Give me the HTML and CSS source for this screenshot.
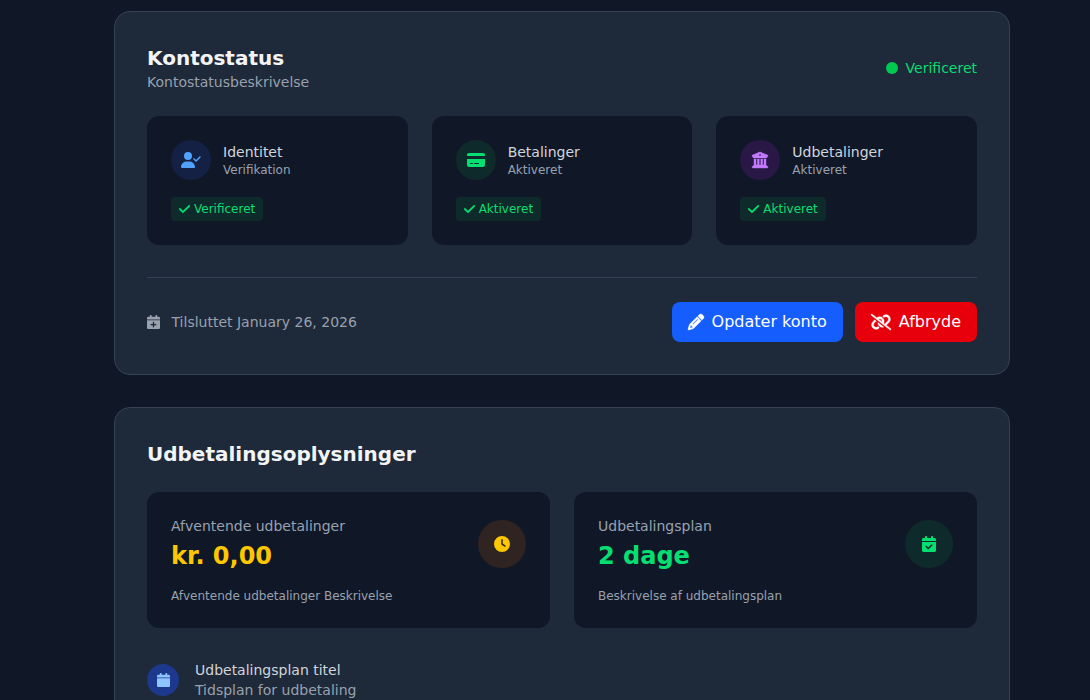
FILE: index.html
```html
<!DOCTYPE html>
<html lang="da">
<head>
<meta charset="utf-8">
<title>Kontostatus</title>
<link rel="stylesheet" href="styles.css">
</head>
<body>
<svg class="defs" aria-hidden="true">
  <symbol id="check" viewBox="0 0 448 512" preserveAspectRatio="none"><path d="M438.6 105.4c12.5 12.5 12.5 32.8 0 45.3l-256 256c-12.5 12.5-32.8 12.5-45.3 0l-128-128c-12.5-12.5-12.5-32.8 0-45.3s32.8-12.5 45.3 0L160 338.7 393.4 105.4c12.5-12.5 32.8-12.5 45.3 0z"/></symbol>
</svg>
<main class="page">
  <section class="card">
    <header class="card-header">
      <div>
        <h2 class="title">Kontostatus</h2>
        <p class="subtitle">Kontostatusbeskrivelse</p>
      </div>
      <div class="state"><span class="dot"></span>Verificeret</div>
    </header>
    <div class="tiles three">
      <article class="tile">
        <div class="tile-head">
          <span class="circle c40 blue"><svg width="20" height="16" viewBox="0 0 640 512"><path d="M96 128a128 128 0 1 1 256 0A128 128 0 1 1 96 128zM0 482.3C0 383.8 79.8 304 178.3 304h91.4C368.2 304 448 383.8 448 482.3c0 16.4-13.3 29.7-29.7 29.7H29.7C13.3 512 0 498.7 0 482.3zM625 177L497 305c-9.4 9.4-24.6 9.4-33.9 0l-64-64c-9.4-9.4-9.4-24.6 0-33.9s24.6-9.4 33.9 0l47 47L591 143c9.4-9.4 24.6-9.4 33.9 0s9.4 24.6 0 33.9z"/></svg></span>
          <div><h3 class="name">Identitet</h3><p class="small">Verifikation</p></div>
        </div>
        <span class="badge"><svg class="bold" width="11" height="12"><use href="#check"/></svg>Verificeret</span>
      </article>
      <article class="tile">
        <div class="tile-head">
          <span class="circle c40 green"><svg width="18" height="16" viewBox="0 0 576 512"><path d="M64 32C28.7 32 0 60.7 0 96v32H576V96c0-35.3-28.7-64-64-64H64zM576 224H0V416c0 35.3 28.7 64 64 64H512c35.3 0 64-28.7 64-64V224zM112 352h64c8.8 0 16 7.2 16 16s-7.2 16-16 16H112c-8.8 0-16-7.2-16-16s7.2-16 16-16zm112 16c0-8.8 7.2-16 16-16H368c8.8 0 16 7.2 16 16s-7.2 16-16 16H240c-8.8 0-16-7.2-16-16z"/></svg></span>
          <div><h3 class="name">Betalinger</h3><p class="small">Aktiveret</p></div>
        </div>
        <span class="badge"><svg class="bold" width="11" height="12"><use href="#check"/></svg>Aktiveret</span>
      </article>
      <article class="tile">
        <div class="tile-head">
          <span class="circle c40 purple"><svg class="medium" width="16" height="16" viewBox="0 0 512 512"><path d="M243.4 2.6l-224 96c-14 6-21.8 21-18.7 35.8S16.8 160 32 160v8c0 13.3 10.7 24 24 24H456c13.3 0 24-10.7 24-24v-8c15.2 0 28.3-10.7 31.3-25.6s-4.8-29.9-18.7-35.8l-224-96c-8-3.4-17.2-3.4-25.2 0zM128 224H64V420.3c-.6 .3-1.2 .7-1.8 1.1l-48 32c-11.7 7.8-17 22.4-12.9 35.9S17.9 512 32 512H480c14.1 0 26.5-9.2 30.6-22.7s-1.1-28.1-12.9-35.9l-48-32c-.6-.4-1.2-.7-1.8-1.1V224H384V416H344V224H280V416H232V224H168V416H128V224zM256 64a32 32 0 1 1 0 64 32 32 0 1 1 0-64z"/></svg></span>
          <div><h3 class="name">Udbetalinger</h3><p class="small">Aktiveret</p></div>
        </div>
        <span class="badge"><svg class="bold" width="11" height="12"><use href="#check"/></svg>Aktiveret</span>
      </article>
    </div>
    <footer class="card-footer">
      <div class="connected"><svg width="13" height="14" preserveAspectRatio="none" viewBox="0 0 448 512"><path fill-rule="evenodd" d="M96 32V64H48C21.5 64 0 85.5 0 112v48H448V112c0-26.5-21.5-48-48-48H352V32c0-17.7-14.3-32-32-32s-32 14.3-32 32V64H160V32c0-17.7-14.3-32-32-32S96 14.3 96 32zM448 192H0V464c0 26.5 21.5 48 48 48H400c26.5 0 48-21.5 48-48V192zM224 248c13.3 0 24 10.7 24 24v56h56c13.3 0 24 10.7 24 24s-10.7 24-24 24H248v56c0 13.3-10.7 24-24 24s-24-10.7-24-24V376H144c-13.3 0-24-10.7-24-24s10.7-24 24-24h56V272c0-13.3 10.7-24 24-24z"/></svg>Tilsluttet January 26, 2026</div>
      <div class="actions">
        <button class="btn btn-blue"><svg class="medium" width="16" height="16" viewBox="0 0 512 512"><path d="M410.3 231l11.3-11.3-33.9-33.9-62.1-62.1L291.7 89.8l-11.3 11.3-22.6 22.6L58.6 322.9c-10.4 10.4-18 23.3-22.2 37.4L1 480.7c-2.5 8.4-.2 17.5 6.1 23.7s15.3 8.5 23.7 6.1l120.3-35.4c14.1-4.2 27-11.8 37.4-22.2L387.7 253.7 410.3 231zM160 399.4l-9.1 22.7c-4 3.1-8.5 5.4-13.3 6.9L59.4 452l23-78.1c1.4-4.9 3.8-9.4 6.9-13.3l22.7-9.1v32c0 8.8 7.2 16 16 16h32zM362.7 18.7L348.3 33.2 325.7 55.8 314.3 67.1l33.9 33.9 62.1 62.1 33.9 33.9 11.3-11.3 22.6-22.6 14.5-14.5c25-25 25-65.5 0-90.5L453.3 18.7c-25-25-65.5-25-90.5 0zm-47.4 168l-144 144c-6.2 6.2-16.4 6.2-22.6 0s-6.2-16.4 0-22.6l144-144c6.2-6.2 16.4-6.2 22.6 0s6.2 16.4 0 22.6z"/></svg>Opdater konto</button>
        <button class="btn btn-red"><svg class="medium" width="20" height="16" viewBox="0 0 640 512"><path d="M38.8 5.1C28.4-3.1 13.3-1.2 5.1 9.2S-1.2 34.7 9.2 42.9l592 464c10.4 8.2 25.5 6.3 33.7-4.1s6.3-25.5-4.1-33.7L489.3 358.2l90.5-90.5c56.5-56.5 56.5-148 0-204.5c-50-50-128.8-56.5-186.3-15.4l-1.6 1.1c-14.4 10.3-17.7 30.3-7.4 44.6s30.3 17.7 44.6 7.4l1.6-1.1c32.1-22.9 76-19.3 103.8 8.6c31.5 31.5 31.5 82.5 0 114l-96 96-31.9-25C430.9 239.6 420.1 175.1 377 132c-52.2-52.3-134.5-56.2-191.3-11.7L38.8 5.1zM239 162c30.1-14.9 67.7-9.9 92.8 15.3c20 20 27.5 48.3 21.7 74.5L239 162zM406.6 416.4L220.9 270c-2.1 39.8 12.2 80.1 42.2 110c38.9 38.9 94.4 51 143.6 36.3zm-290-228.5L60.2 244.3c-56.5 56.5-56.5 148 0 204.5c50 50 128.8 56.5 186.3 15.4l1.6-1.1c14.4-10.3 17.7-30.3 7.4-44.6s-30.3-17.7-44.6-7.4l-1.6 1.1c-32.1 22.9-76 19.3-103.8-8.6C74 372 74 321 105.5 289.5l61.8-61.8-50.6-39.9z"/></svg>Afbryde</button>
      </div>
    </footer>
  </section>

  <section class="card">
    <h2 class="title section-title">Udbetalingsoplysninger</h2>
    <div class="tiles two">
      <article class="tile">
        <div class="metric">
          <div><p class="label">Afventende udbetalinger</p><p class="value value-yellow">kr. 0,00</p></div>
          <span class="circle c48 yellow"><svg width="16" height="16" viewBox="0 0 512 512"><path d="M256 0a256 256 0 1 1 0 512A256 256 0 1 1 256 0zM232 120V256c0 8 4 15.5 10.7 20l96 64c11 7.4 25.9 4.4 33.3-6.7s4.4-25.9-6.7-33.3L280 243.2V120c0-13.3-10.7-24-24-24s-24 10.7-24 24z"/></svg></span>
        </div>
        <p class="small">Afventende udbetalinger Beskrivelse</p>
      </article>
      <article class="tile">
        <div class="metric">
          <div><p class="label">Udbetalingsplan</p><p class="value value-green">2 dage</p></div>
          <span class="circle c48 green"><svg width="14" height="16" viewBox="0 0 448 512"><path fill-rule="evenodd" d="M96 32V64H48C21.5 64 0 85.5 0 112v48H448V112c0-26.5-21.5-48-48-48H352V32c0-17.7-14.3-32-32-32s-32 14.3-32 32V64H160V32c0-17.7-14.3-32-32-32S96 14.3 96 32zM448 192H0V464c0 26.5 21.5 48 48 48H400c26.5 0 48-21.5 48-48V192zM329 305c9.4-9.4 9.4-24.6 0-33.9s-24.6-9.4-33.9 0l-95 95-47-47c-9.4-9.4-24.6-9.4-33.9 0s-9.4 24.6 0 33.9l64 64c9.4 9.4 24.6 9.4 33.9 0L329 305z"/></svg></span>
        </div>
        <p class="small">Beskrivelse af udbetalingsplan</p>
      </article>
    </div>
    <div class="schedule">
      <span class="circle c32 solid"><svg width="13" height="14" preserveAspectRatio="none" viewBox="0 0 448 512"><path d="M96 32V64H48C21.5 64 0 85.5 0 112v48H448V112c0-26.5-21.5-48-48-48H352V32c0-17.7-14.3-32-32-32s-32 14.3-32 32V64H160V32c0-17.7-14.3-32-32-32S96 14.3 96 32zM448 192H0V464c0 26.5 21.5 48 48 48H400c26.5 0 48-21.5 48-48V192z"/></svg></span>
      <div><h3 class="name">Udbetalingsplan titel</h3><p class="subtitle">Tidsplan for udbetaling</p></div>
    </div>
  </section>
</main>
</body>
</html>
```
FILE: styles.css
```css
* { box-sizing: border-box; margin: 0; padding: 0; }
html { overflow: hidden; }
body {
  background: #101828;
  color: #e5e7eb;
  font-family: "DejaVu Sans", sans-serif;
  font-size: 14px;
  line-height: 20px;
  height: 700px;
  overflow: hidden;
}
svg { display: block; fill: currentColor; flex-shrink: 0; overflow: visible; }
.medium { stroke: currentColor; stroke-width: 12; }
.bold { stroke: currentColor; stroke-width: 20; }
.defs { display: none; }
.page {
  width: 896px;
  margin-left: 114px;
  padding-top: 11px;
  display: flex;
  flex-direction: column;
  gap: 32px;
}
.card {
  background: #1e2939;
  border: 1px solid #364153;
  border-radius: 16px;
  padding: 32px;
}
.card-header { display: flex; justify-content: space-between; align-items: center; margin-bottom: 24px; }
.title { font-size: 20px; line-height: 28px; font-weight: 700; color: #f3f4f6; }
.subtitle { color: #99a1af; }
.state { display: flex; align-items: center; gap: 8px; color: #05df72; }
.dot { width: 12px; height: 12px; border-radius: 50%; background: #00c950; }
.tiles { display: grid; gap: 24px; }
.three { grid-template-columns: repeat(3, 1fr); }
.two { grid-template-columns: repeat(2, 1fr); }
.tile { background: #101828; border-radius: 12px; padding: 24px; }
.tile-head { display: flex; align-items: center; gap: 12px; margin-bottom: 17px; }
.circle { display: flex; align-items: center; justify-content: center; border-radius: 50%; flex-shrink: 0; }
.c40 { width: 40px; height: 40px; }
.c48 { width: 48px; height: 48px; }
.c32 { width: 32px; height: 32px; }
.blue { background: #142144; color: #51a2ff; }
.green { background: #0f2a2a; color: #05df72; }
.purple { background: #291846; color: #c27aff; }
.yellow { background: #2f2422; color: #fdc700; }
.solid { background: #1c398e; color: #8ec5ff; }
.name { font-size: 14px; line-height: 20px; font-weight: 400; color: #d1d5dc; }
.small { font-size: 12px; line-height: 16px; color: #99a1af; }
.badge {
  display: flex;
  width: fit-content;
  height: 24px;
  align-items: center;
  gap: 4px;
  padding: 4px 8px;
  border-radius: 4px;
  background: #0f2a2a;
  color: #05df72;
  font-size: 12px;
  line-height: 16px;
}
.card-footer {
  display: flex;
  align-items: center;
  justify-content: space-between;
  margin-top: 32px;
  padding-top: 24px;
  border-top: 1px solid #364153;
}
.connected { display: flex; align-items: center; gap: 11.5px; color: #99a1af; }
.actions { display: flex; gap: 12px; }
.btn {
  display: flex;
  align-items: center;
  gap: 8px;
  height: 40px;
  padding: 8px 16px;
  border: 0;
  border-radius: 8px;
  color: #fff;
  font-family: inherit;
  font-size: 16px;
  line-height: 24px;
}
.btn-blue { background: #155dfc; }
.btn-red { background: #e7000b; }
.section-title { margin-bottom: 24px; }
.metric { display: flex; align-items: center; justify-content: space-between; margin-bottom: 16px; }
.label { color: #99a1af; }
.value { margin-top: 4px; font-size: 24px; line-height: 32px; font-weight: 700; }
.value-yellow { color: #fdc700; }
.value-green { color: #05df72; }
.schedule { display: flex; align-items: center; gap: 16px; margin-top: 32px; }
```
